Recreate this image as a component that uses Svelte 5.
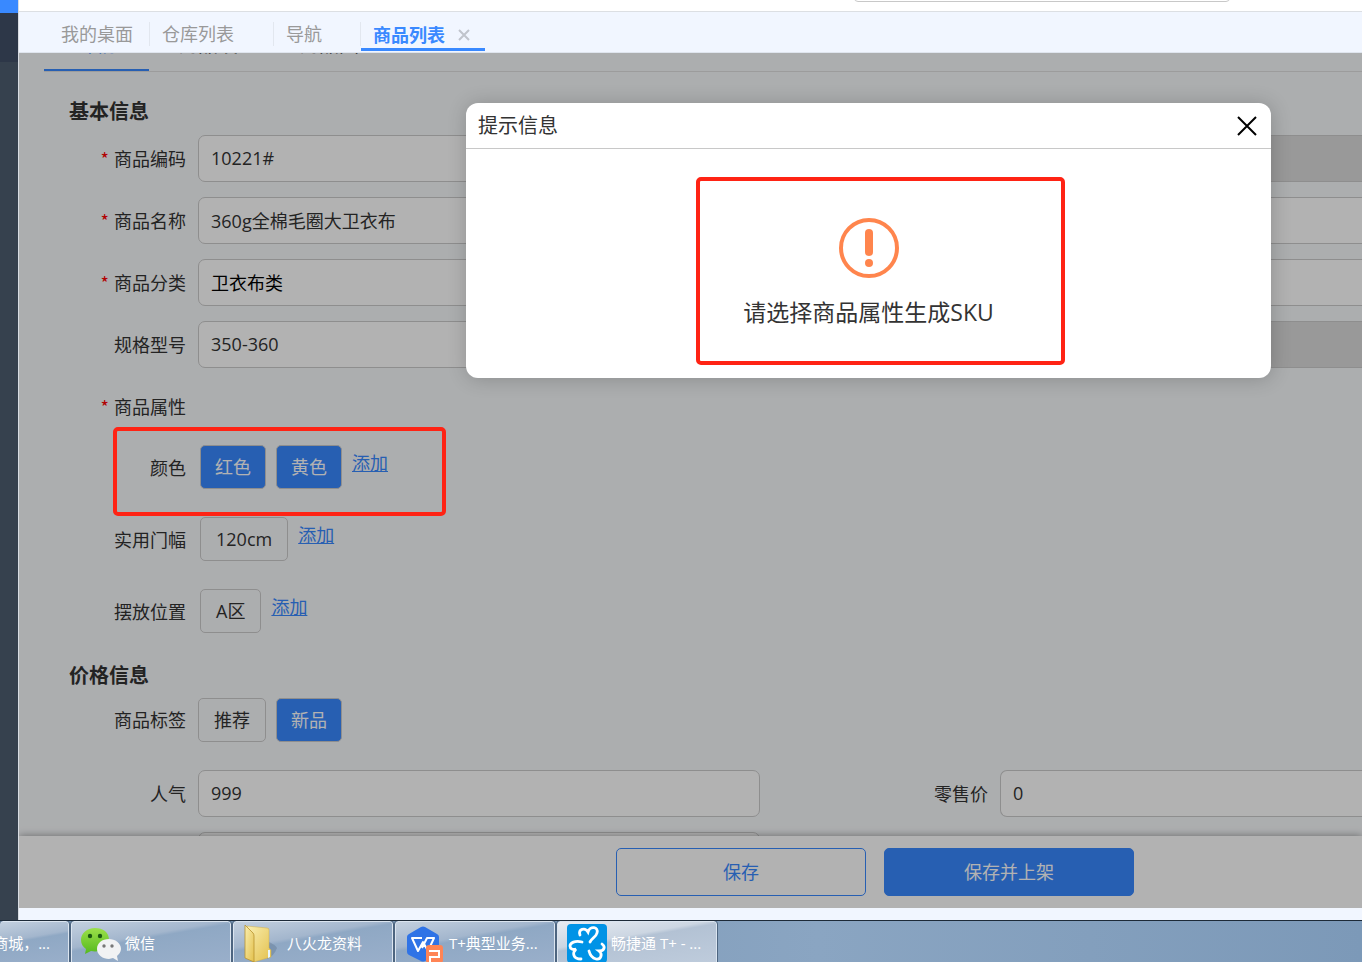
<script lang="ts">
const tabs = ["我的桌面", "仓库列表", "导航"];

const fields = [
  { id: "code", label: "商品编码", value: "10221#", required: true, locked: true },
  { id: "name", label: "商品名称", value: "360g全棉毛圈大卫衣布", required: true, locked: false },
  { id: "category", label: "商品分类", value: "卫衣布类", required: true, locked: false },
  { id: "spec", label: "规格型号", value: "350-360", required: false, locked: true },
];

const attributes = [
  { label: "颜色", options: ["红色", "黄色"], selected: true, marked: true },
  { label: "实用门幅", options: ["120cm"], selected: false, marked: false },
  { label: "摆放位置", options: ["A区"], selected: false, marked: false },
];

let showDialog = $state(true);
</script>

<div class="screen">
  <div class="workspace">
    <aside class="sidebar">
      <div class="side-logo"></div>
      <div class="side-active"></div>
    </aside>

    <div class="main">
      <header class="topbar">
        <input class="search" type="text" aria-label="搜索" />
      </header>

      <nav class="tabs">
        {#each tabs as tab}
          <a class="tab" href="#top">{tab}</a>
        {/each}
        <div class="tab active">
          <a href="#top">商品列表</a>
          <button type="button" class="tab-close" aria-label="关闭">
            <svg width="12" height="12" viewBox="0 0 12 12" aria-hidden="true">
              <path d="M1 1l10 10M11 1L1 11" stroke="#c0c4cc" stroke-width="2" />
            </svg>
          </button>
        </div>
      </nav>

      <main class="content">
        <form class="form" onsubmit={(e) => e.preventDefault()}>
          <div class="subtabs">
            <a class="subtab active" href="#top">详情</a>
            <a class="subtab" href="#top">商品设置</a>
            <a class="subtab" href="#top">商品图</a>
          </div>

          <h2>基本信息</h2>
          <div class="fields">
            {#each fields as field}
              <div class="row">
                <label for={field.id}>
                  {#if field.required}<span class="star">*</span>{/if}{field.label}
                </label>
                <input
                  id={field.id}
                  class:dark={field.id === "category"}
                  type="text"
                  value={field.value}
                />
                <span></span>
                <input
                  class="cut"
                  class:locked={field.locked}
                  type="text"
                  aria-label={field.label}
                  disabled={field.locked}
                />
              </div>
            {/each}
            <div class="row">
              <span class="label"><span class="star">*</span>商品属性</span>
            </div>
          </div>

          <div class="attributes">
            {#each attributes as attr}
              <div class="attribute">
                <span class="label">{attr.label}</span>
                <div class="chips">
                  {#each attr.options as option}
                    <button type="button" class="chip" class:selected={attr.selected}>{option}</button>
                  {/each}
                  <a class="add" href="#top">添加</a>
                </div>
                {#if attr.marked}<div class="mark mark-attribute"></div>{/if}
              </div>
            {/each}
          </div>

          <h2 class="price-title">价格信息</h2>
          <div class="row tags">
            <span class="label">商品标签</span>
            <div class="chips">
              <button type="button" class="chip">推荐</button>
              <button type="button" class="chip selected">新品</button>
            </div>
          </div>
          <div class="fields">
            <div class="row">
              <label for="popularity">人气</label>
              <input id="popularity" type="text" value="999" />
              <label for="price">零售价</label>
              <input id="price" class="cut" type="text" value="0" />
            </div>
            <div class="row">
              <span></span>
              <input type="text" aria-label="库存" />
            </div>
          </div>
        </form>

        <footer class="actions">
          <button type="button" class="save">保存</button>
          <button type="button" class="save primary">保存并上架</button>
        </footer>

        {#if showDialog}
          <div class="shade"></div>
          <div class="dialog" role="dialog" aria-labelledby="dialog-title">
            <div class="dialog-head">
              <span id="dialog-title">提示信息</span>
              <button type="button" class="close" aria-label="关闭" onclick={() => (showDialog = false)}>
                <svg width="20" height="20" viewBox="0 0 20 20" aria-hidden="true">
                  <path d="M1 1l18 18M19 1L1 19" stroke="#000" stroke-width="2" />
                </svg>
              </button>
            </div>
            <div class="dialog-body">
              <svg width="60" height="60" viewBox="0 0 60 60" aria-hidden="true">
                <circle cx="30" cy="30" r="28" fill="none" stroke="#ff854d" stroke-width="4" />
                <rect x="26" y="11" width="8" height="27" rx="4" fill="#ff854d" />
                <circle cx="30" cy="45" r="4" fill="#ff854d" />
              </svg>
              <p>请选择商品属性生成SKU</p>
            </div>
            <div class="mark mark-dialog"></div>
          </div>
        {/if}
      </main>
    </div>
  </div>

  <div class="taskbar">
    <button type="button" class="task first">商城，...</button>
    <button type="button" class="task">
      <svg width="42" height="40" viewBox="0 0 42 40" aria-hidden="true">
        <defs>
          <linearGradient id="wx" x1="0" y1="0" x2="0" y2="1">
            <stop offset="0" stop-color="#9be04a" />
            <stop offset="1" stop-color="#55b91d" />
          </linearGradient>
        </defs>
        <path d="M15 5C7 5 1 10 1 17c0 4 2 7 5 9l-1 5 6-3c9 2 18-3 18-11S23 5 15 5z" fill="url(#wx)" />
        <circle cx="10" cy="13" r="2.2" fill="#1c5a12" />
        <circle cx="20" cy="13" r="2.2" fill="#1c5a12" />
        <path d="M29 16c-7 0-12 4-12 10s6 10 12 10l4-1 5 3-1-5c2-2 4-4 4-7 0-6-6-10-12-10z" fill="#f1f2f3" />
        <circle cx="24" cy="23" r="1.7" fill="#777" />
        <circle cx="32" cy="23" r="1.7" fill="#777" />
      </svg>
      <span>微信</span>
    </button>
    <button type="button" class="task">
      <svg width="42" height="40" viewBox="0 0 42 40" aria-hidden="true">
        <defs>
          <linearGradient id="folder" x1="0" y1="0" x2="1" y2="1">
            <stop offset="0" stop-color="#f9eeb0" />
            <stop offset="1" stop-color="#e3c04c" />
          </linearGradient>
        </defs>
        <path d="M25 18q9 4 10 7-3 8-10 11z" fill="#4b637d" opacity=".3" />
        <path d="M5 3l20 2q2 0 2 2v18l2 2v7L12 39z" fill="url(#folder)" stroke="#d3b04a" stroke-width=".5" />
        <path d="M26 27h2v7l-2 1z" fill="#e8f6fb" />
        <path d="M3 2l8 8q1 1 1 3v26l-9-4z" fill="url(#folder)" stroke="#b8922e" stroke-width=".8" />
      </svg>
      <span>八火龙资料</span>
    </button>
    <button type="button" class="task">
      <svg width="42" height="40" viewBox="0 0 42 40" aria-hidden="true">
        <path d="M17 4q2-1 4 0l12 7q2 1 2 3v15q0 2-2 3l-12 6q-2 1-4 0L5 32q-2-1-2-3V14q0-2 2-3z" fill="#2f73e6" />
        <path d="M18 15H8l6 13 5-9 5 9 6-13h-7l-5 10" fill="none" stroke="#fff" stroke-width="2" stroke-linejoin="round" />
        <rect x="22" y="22" width="17" height="18" rx="3" fill="#ff8455" />
        <path d="M25 28h10v6h-9v5" fill="none" stroke="#fff" stroke-width="2" />
      </svg>
      <span>T+典型业务...</span>
    </button>
    <button type="button" class="task current">
      <svg width="42" height="40" viewBox="0 0 42 40" aria-hidden="true">
        <rect x="1" y="1" width="40" height="39" rx="4" fill="#0093e6" />
        <g fill="none" stroke="#fff" stroke-width="2.8" stroke-linecap="round">
          <path d="M14 12c-2-6 5-8 8-3 2-7 11-5 9 1-1 4-5 5-7 9" />
          <path d="M16 19C9 17 4 20 4 23c0 3 3 4 6 3-4 4-3 10 5 10" />
          <path d="M36 21c4 3 2 7-3 7 4 3 2 9-3 8-4-1-6-4-7-8" />
        </g>
      </svg>
      <span>畅捷通 T+ - ...</span>
    </button>
  </div>
</div>

<style>
:global(body) {
  margin: 0;
}

.screen {
  display: flex;
  flex-direction: column;
  height: 100vh;
  overflow: hidden;
  font-family: "Open Sans", "Noto Sans CJK SC", sans-serif;
  font-size: 18px;
  line-height: 24px;
  color: #333;
  background: #f1f6ff;
}

button,
input {
  box-sizing: border-box;
  font: inherit;
  color: inherit;
}
button {
  padding: 0;
  cursor: pointer;
}
a {
  color: inherit;
  text-decoration: none;
}

.workspace {
  flex: 1;
  min-height: 0;
  display: flex;
}

.sidebar {
  width: 18px;
  background: #36414e;
  border-right: 1px solid #d8dce2;
}
.side-logo {
  height: 13px;
  background: #3989ff;
}
.side-active {
  height: 49px;
  background: #2d3748;
}

.main {
  flex: 1;
  min-width: 0;
  display: flex;
  flex-direction: column;
  padding-bottom: 12px;
}

.topbar {
  height: 11px;
  display: flex;
  align-items: flex-end;
  justify-content: flex-end;
  overflow: hidden;
  background: #fff;
  border-bottom: 1px solid #dcdfe3;
}
.search {
  width: 376px;
  height: 32px;
  margin: 0 132px 9px 0;
  border: 1px solid #c8c8c8;
  border-radius: 4px;
}

.tabs {
  display: flex;
  align-items: flex-end;
  height: 40px;
  padding-left: 30px;
  color: #999;
  border-bottom: 1px solid #dfe5ee;
}
.tab {
  margin-bottom: 6px;
  padding: 0 16px 0 12px;
  border-right: 1px solid #e2e7ef;
}
.tab:nth-child(2) {
  padding-right: 39px;
}
.tab:nth-child(3) {
  padding-right: 38px;
}
.tab.active {
  display: flex;
  align-items: center;
  gap: 13px;
  margin-bottom: 1px;
  padding: 0 15px 1px 12px;
  border-right: none;
  border-bottom: 3px solid #3989ff;
  color: #3989ff;
  font-weight: bold;
}
.tab-close {
  display: flex;
  border: none;
  background: none;
}

.content {
  position: relative;
  flex: 1;
  min-height: 0;
  display: flex;
  flex-direction: column;
  overflow: hidden;
  background: #f7f9fb;
}

.form {
  flex: 1;
  min-height: 0;
  overflow: hidden;
}

.subtabs {
  display: flex;
  height: 48px;
  margin: -30px 0 0 25px;
  border-bottom: 1px solid #e0e0e0;
  font-size: 20px;
}
.subtab {
  padding: 10px 12px 0 29px;
}
.subtab.active {
  box-sizing: border-box;
  width: 105px;
  height: 48px;
  padding: 10px 0 0;
  text-align: center;
  color: #3989ff;
  border-bottom: 2px solid #3989ff;
}

h2 {
  margin: 0 0 0 50px;
  padding: 25px 0 9px;
  font-size: 20px;
  line-height: 29px;
}
.price-title {
  padding: 28px 0 6px;
}

.fields {
  display: grid;
  gap: 15px;
}
.row {
  display: grid;
  grid-template-columns: 167px minmax(0, 562fr) 216px minmax(0, 362fr);
  column-gap: 12px;
  align-items: center;
  min-height: 47px;
}
.row input {
  min-width: 0;
  height: 47px;
  padding: 0 12px 2px;
  border: 1px solid #ccc;
  border-radius: 7px;
  background: #fff;
}
.row input.cut {
  border-right: none;
  border-radius: 7px 0 0 7px;
}
.row input.locked {
  background: #dcdcdc;
}
.row input.dark {
  color: #000;
}
label,
.label {
  text-align: right;
}
.star {
  margin-right: 5px;
  font-family: "Noto Sans CJK SC", sans-serif;
  font-size: 18px;
  color: #f00;
}

.attributes {
  display: grid;
  gap: 28px;
  padding-top: 15px;
}
.attribute {
  position: relative;
  display: grid;
  grid-template-columns: 167px 1fr;
  column-gap: 14px;
  align-items: center;
}
.attribute .label {
  padding-top: 2px;
}
.chips {
  display: flex;
  gap: 10px;
}
.chip {
  height: 44px;
  padding: 0 15px;
  border: 1px solid #ccc;
  border-radius: 5px;
  background: none;
}
.chip.selected {
  padding: 0 14px;
  color: #fff;
  background: #3989ff;
}
.add {
  line-height: 36px;
  color: #3989ff;
  text-decoration: underline;
}
.tags {
  margin-bottom: 27px;
}

.actions {
  display: flex;
  gap: 18px;
  padding: 12px 0 12px 597px;
  background: #fff;
  box-shadow: 0 0 8px rgba(0, 0, 0, 0.4);
}
.save {
  width: 250px;
  height: 48px;
  border: 1px solid #3989ff;
  border-radius: 5px;
  background: #fff;
  color: #3989ff;
}
.save.primary {
  background: #3989ff;
  color: #fff;
}

.shade {
  position: absolute;
  inset: 0;
  z-index: 1;
  background: rgba(0, 0, 0, 0.3);
}

.dialog {
  position: absolute;
  top: 50px;
  left: 447px;
  right: 91px;
  z-index: 2;
  border-radius: 12px;
  background: #fff;
  box-shadow: 1px 1px 20px rgba(0, 0, 0, 0.2);
}
.dialog-head {
  display: flex;
  align-items: center;
  justify-content: space-between;
  height: 45px;
  padding: 0 14px 0 12px;
  border-bottom: 1px solid #c8c8c8;
  font-size: 20px;
}
.close {
  display: flex;
  border: none;
  background: none;
}
.dialog-body {
  display: flex;
  flex-direction: column;
  align-items: center;
  gap: 19px;
  padding: 69px 0 51px;
}
.dialog-body p {
  margin: 0;
  font-size: 23px;
  line-height: 30px;
}

/* red highlight frames drawn over the form and the dialog */
.mark {
  position: absolute;
  z-index: 3;
  box-sizing: border-box;
  border: 4px solid #ff2314;
  border-radius: 5px;
}
.mark-attribute {
  top: -18px;
  left: 94px;
  width: 333px;
  height: 89px;
}
.mark-dialog {
  top: 74px;
  left: 230px;
  width: 369px;
  height: 188px;
}

.taskbar {
  display: flex;
  gap: 2px;
  height: 41px;
  overflow: hidden;
  border-top: 1px solid #1d2a38;
  background: linear-gradient(90deg, #6f8dab, #8aa5c2 60%, #7c99b8);
}
.task {
  display: flex;
  align-items: center;
  gap: 3px;
  width: 160px;
  height: 48px;
  padding: 0 0 4px 8px;
  border: 1px solid #dbe5f0;
  border-radius: 3px;
  outline: 1px solid #4d6580;
  background: linear-gradient(170deg, #c3d0df 0, #a3b6cd 35%, #8fa8c4 40%, #9bb0cb);
  font-size: 15px;
  color: #fff;
  white-space: nowrap;
}
.task.first {
  width: 69px;
  padding-left: 0;
  justify-content: flex-end;
  padding-right: 18px;
  border-left: none;
}
.task.current {
  background: linear-gradient(170deg, #e6ebf2 0, #ccd6e2 35%, #b3c2d4 40%, #c0cddd);
}
</style>
